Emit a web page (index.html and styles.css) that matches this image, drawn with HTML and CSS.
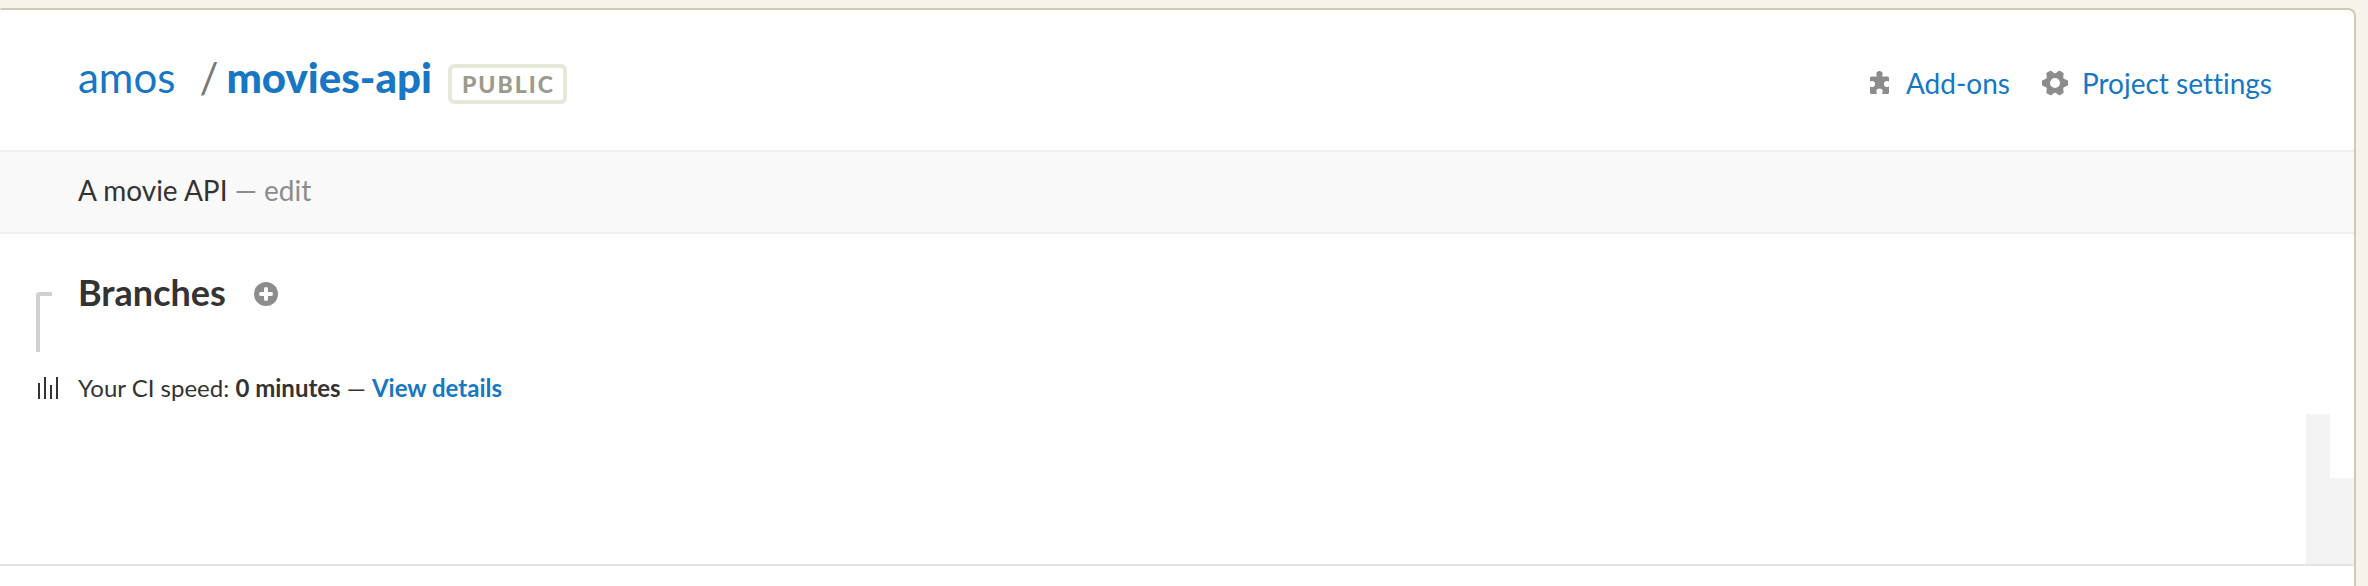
FILE: index.html
```html
<!DOCTYPE html>
<html lang="en">
<head>
    <meta charset="UTF-8">
    <title>amos/movies-api</title>
    <link rel="stylesheet" href="styles.css">
</head>
<body>
    <main class="panel">
        <!-- Project header -->
        <header class="project-header">
            <h1 class="project-title">
                <a class="owner" href="#">amos</a>
                <span class="slash">/</span>
                <a class="project-name" href="#">movies-api</a>
                <span class="badge">PUBLIC</span>
            </h1>
            <nav class="project-nav">
                <a href="#">
                    <svg class="icon-puzzle" width="20" height="24" viewBox="0 0 20 24" aria-hidden="true">
                        <path d="M7 5.500C6 4 5.800 0 9.500 0S13 4 12 5.500H17.500A1.500 1.500 0 0 1 19 7V10.500C17.500 9.800 14 9.300 14 13s3.500 3.300 5 2.500V21.500A1.500 1.500 0 0 1 17.500 23H12.500c-.6-1 .2-2 .2-3.200 0-1.300-1.400-2.300-3.200-2.300s-3.200 1-3.200 2.300c0 1.200.8 2.200.2 3.200H1.500A1.500 1.500 0 0 1 0 21.500V15.500c1.500.8 5 1.200 5-2.500S1.500 9.800 0 10.500V7A1.500 1.500 0 0 1 1.500 5.500z" />
                    </svg>
                    Add-ons
                </a>
                <a href="#">
                    <svg class="icon-gear" width="26" height="26" viewBox="-13 -13 26 26" aria-hidden="true">
                        <circle r="7" fill="none" stroke="currentColor" stroke-width="4" />
                        <path id="tooth" d="M7 -5.500L10 -3.800L12.500 -2.800L13 -2V2L12.500 2.800L10 3.800L7 5.500z" />
                        <use href="#tooth" transform="rotate(60)" />
                        <use href="#tooth" transform="rotate(120)" />
                        <use href="#tooth" transform="rotate(180)" />
                        <use href="#tooth" transform="rotate(240)" />
                        <use href="#tooth" transform="rotate(300)" />
                    </svg>
                    Project settings
                </a>
            </nav>
        </header>

        <!-- Description -->
        <div class="description">
            A movie API <span class="muted">— <a href="#">edit</a></span>
        </div>

        <!-- Branches -->
        <section class="branches">
            <div class="branches-main">
                <div class="branches-row">
                    <span class="bracket"></span>
                    <h2>Branches</h2>
                    <button class="add-branch" type="button" aria-label="Add branch">
                        <svg width="24" height="24" viewBox="0 0 24 24" aria-hidden="true">
                            <circle cx="12" cy="12" r="12" fill="#8c8c8c" />
                            <path d="M12 7v10M7 12h10" stroke="#fff" stroke-width="4" stroke-linecap="round" />
                        </svg>
                    </button>
                </div>
                <div class="speed-row">
                    <svg class="icon-bars" width="24" height="22" viewBox="0 0 24 22" aria-hidden="true">
                        <path d="M2 6h2v16H2zM8 0h2v22H8zM14 8h2v14h-2zM20 0h2v22h-2z" />
                    </svg>
                    <p>Your CI speed: <strong>0 minutes</strong> — <a href="#">View details</a></p>
                </div>
            </div>
            <div class="chart">
                <span class="bar bar-tall"></span>
                <span class="bar bar-short"></span>
            </div>
        </section>
    </main>
</body>
</html>
```

FILE: styles.css
```css
* {
    box-sizing: border-box;
    margin: 0;
    padding: 0;
}

body {
    min-height: 100vh;
    padding: 8px 12px 0 0;
    background: #f7f3eb;
    color: #333;
    font-family: Lato, 'Liberation Sans', sans-serif;
    font-size: 28px;
    font-variant-ligatures: none;
    line-height: 32px;
    display: flex;
}

a {
    color: #1777c4;
    text-decoration: none;
}

.panel {
    flex: 1;
    background: #fff;
    border: 2px solid #cdcbb0;
    border-width: 2px 2px 0 0;
    border-radius: 2px 8px 0 0;
}

/* Project header */
.project-header {
    display: flex;
    justify-content: space-between;
    align-items: center;
    padding: 41px 82px 46px 78px;
    border-bottom: 2px solid #eee;
}

.project-title {
    display: flex;
    align-items: baseline;
    font-size: 42px;
    font-weight: 400;
    line-height: 52px;
}

.slash {
    margin: 0 8px 0 24px;
    color: #777;
}

.project-name {
    font-weight: 900;
}

.badge {
    margin-left: 16px;
    padding: 0 8px 0 10px;
    border: 4px solid #e8e8da;
    border-radius: 6px;
    color: #9c9a8c;
    font-size: 23px;
    font-weight: 900;
    line-height: 32px;
    letter-spacing: 2px;
}

.project-nav {
    display: flex;
    gap: 32px;
    padding-top: 10px;
}

.project-nav a {
    display: flex;
    align-items: center;
}

.project-nav svg {
    color: #8c8c8c;
    fill: currentColor;
}

.icon-puzzle {
    margin-right: 16px;
}

.icon-gear {
    margin-right: 14px;
}

/* Description */
.description {
    padding: 22px 78px 26px;
    background: #f9f9f9;
    border-bottom: 2px solid #eee;
}

.muted,
.muted a {
    color: #8c8c8c;
}

/* Branches */
.branches {
    display: flex;
    justify-content: space-between;
    border-bottom: 2px solid #e4e4e4;
}

.branches-main {
    padding: 38px 0 160px 36px;
}

.branches-row {
    display: flex;
    align-items: flex-start;
}

.bracket {
    width: 16px;
    height: 60px;
    margin: 20px 26px 0 0;
    border: 4px solid #d0d0d0;
    border-width: 4px 0 0 4px;
    border-radius: 4px 0 0 0;
}

h2 {
    font-size: 36px;
    font-weight: 700;
    line-height: 40px;
}

.add-branch {
    margin: 10px 0 0 28px;
    border: 0;
    background: none;
    cursor: pointer;
}

.add-branch svg {
    display: block;
}

.speed-row {
    display: flex;
    align-items: center;
    gap: 18px;
    margin-top: 20px;
    font-size: 24px;
}

.speed-row a {
    font-weight: 700;
}

.icon-bars {
    fill: #333;
}

.chart {
    display: flex;
    align-items: flex-end;
}

.bar {
    width: 24px;
    background: #f3f3f3;
}

.bar-tall {
    height: 150px;
}

.bar-short {
    height: 86px;
}
```
